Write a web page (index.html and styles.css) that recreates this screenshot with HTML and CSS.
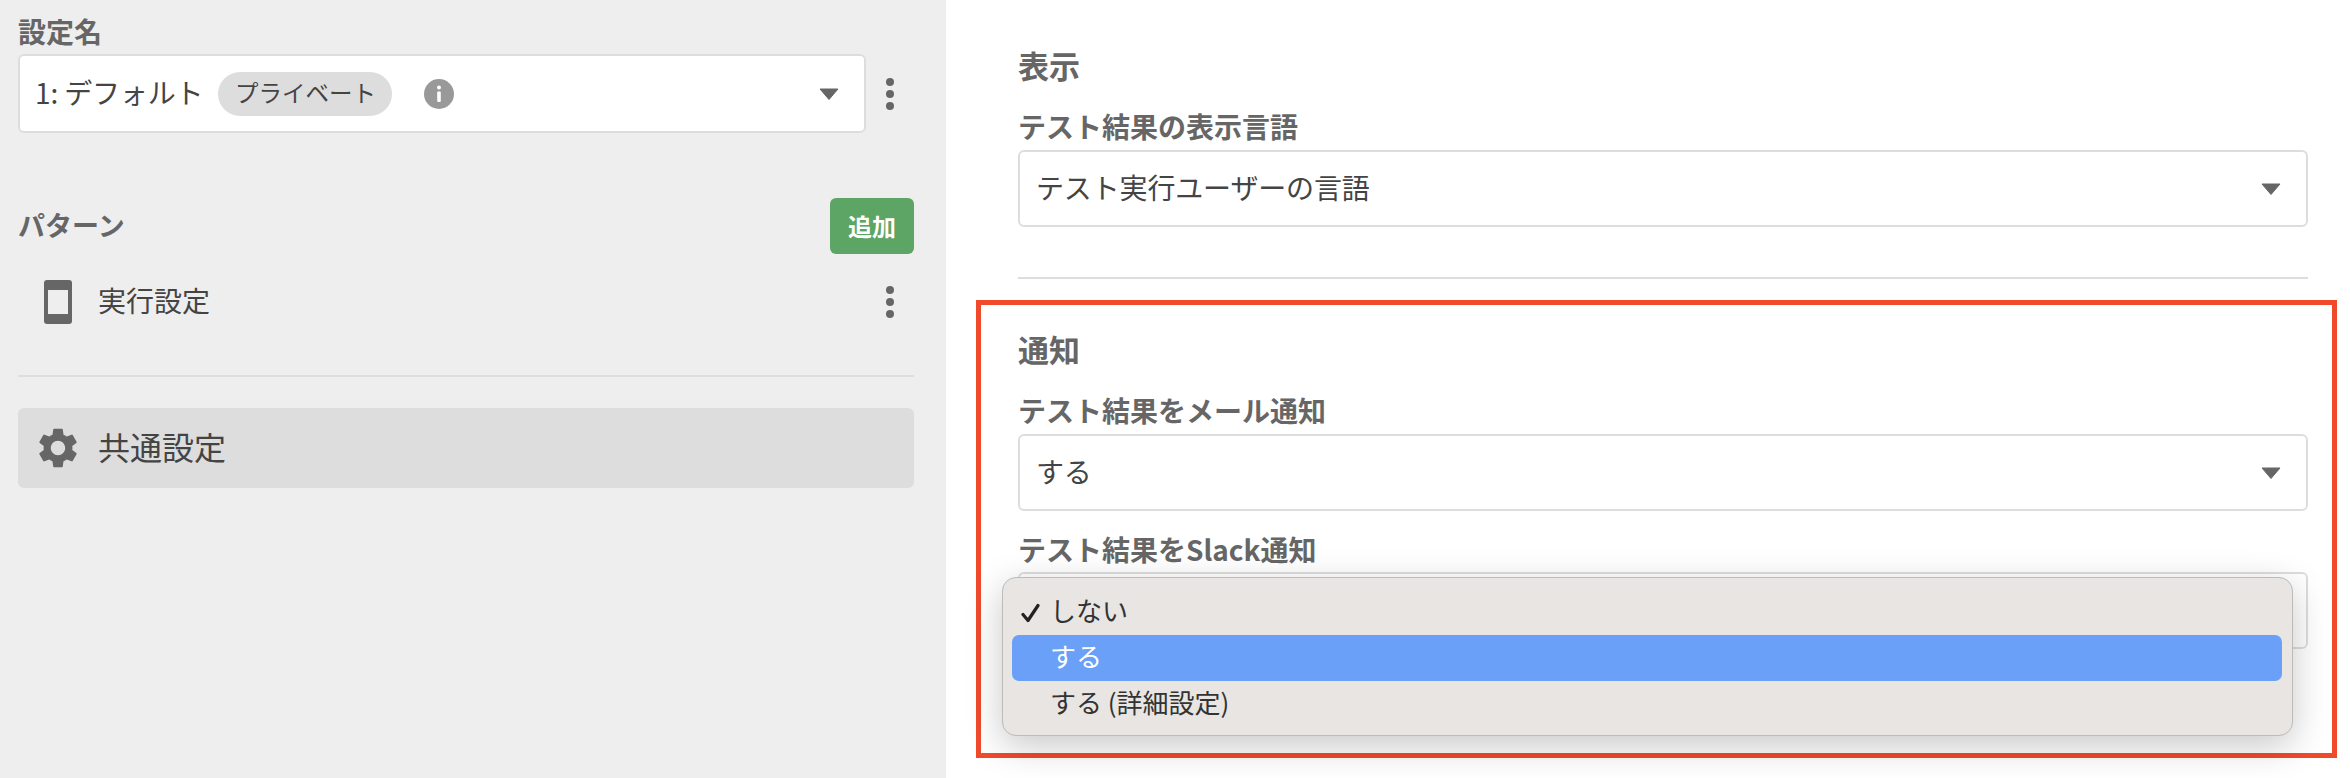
FILE: index.html
```html
<!DOCTYPE html>
<html lang="ja">
<head>
<meta charset="utf-8">
<title>設定</title>
<link rel="stylesheet" href="styles.css">
</head>
<body>
<div class="page">
  <aside class="sidebar">
    <div class="side-label">設定名</div>
    <div class="config-row">
      <div class="select config-select">
        <span class="select-text">1: デフォルト</span>
        <span class="chip">プライベート</span>
        <svg class="info" viewBox="0 0 30 30"><circle cx="15" cy="15" r="15" fill="#999"/><circle cx="15" cy="8.5" r="2" fill="#fff"/><rect x="13.2" y="12.5" width="3.6" height="10.5" rx="1" fill="#fff"/></svg>
        <svg class="caret" viewBox="0 0 20 12"><path d="M1 1h18l-9 10.500z" fill="#666" stroke="#666" stroke-linejoin="round"/></svg>
      </div>
      <div class="kebab"><i></i><i></i><i></i></div>
    </div>
    <div class="pattern-head">
      <span class="side-title">パターン</span>
      <button class="add">追加</button>
    </div>
    <div class="pattern-row">
      <svg class="phone" viewBox="0 0 28 44"><rect width="28" height="44" rx="3" fill="#666"/><rect x="4" y="10" width="20" height="24" fill="#eee"/></svg>
      <span class="pattern-name">実行設定</span>
      <div class="kebab kebab-end"><i></i><i></i><i></i></div>
    </div>
    <hr class="side-rule">
    <div class="common">
      <svg class="gear" viewBox="0 0 24 24"><path fill="#666" d="M19.14 12.94c.04-.3.06-.61.06-.94 0-.32-.02-.64-.07-.94l2.03-1.58a.49.49 0 0 0 .12-.61l-1.92-3.32a.488.488 0 0 0-.59-.22l-2.39.96c-.5-.38-1.03-.7-1.62-.94l-.36-2.54a.484.484 0 0 0-.48-.41h-3.84c-.24 0-.43.17-.47.41l-.36 2.54c-.59.24-1.13.57-1.62.94l-2.39-.96c-.22-.08-.47 0-.59.22L2.74 8.87c-.12.21-.08.47.12.61l2.03 1.58c-.05.3-.09.63-.09.94s.02.64.07.94l-2.03 1.58a.49.49 0 0 0-.12.61l1.92 3.32c.12.22.37.29.59.22l2.39-.96c.5.38 1.03.7 1.62.94l.36 2.54c.05.24.24.41.48.41h3.84c.24 0 .44-.17.47-.41l.36-2.54c.59-.24 1.13-.56 1.62-.94l2.39.96c.22.08.47 0 .59-.22l1.92-3.32c.12-.22.07-.47-.12-.61l-2.01-1.58zM12 15.600c-1.980 0-3.600-1.620-3.600-3.600s1.620-3.600 3.600-3.600 3.600 1.620 3.600 3.600-1.620 3.600-3.600 3.600z"/></svg>
      <span class="common-name">共通設定</span>
    </div>
  </aside>
  <main class="main">
    <h2 class="heading">表示</h2>
    <div class="field-label">テスト結果の表示言語</div>
    <div class="select wide-select">
      <span class="select-text">テスト実行ユーザーの言語</span>
      <svg class="caret" viewBox="0 0 20 12"><path d="M1 1h18l-9 10.500z" fill="#666" stroke="#666" stroke-linejoin="round"/></svg>
    </div>
    <hr class="main-rule">
    <h2 class="heading">通知</h2>
    <div class="field-label">テスト結果をメール通知</div>
    <div class="select wide-select">
      <span class="select-text">する</span>
      <svg class="caret" viewBox="0 0 20 12"><path d="M1 1h18l-9 10.500z" fill="#666" stroke="#666" stroke-linejoin="round"/></svg>
    </div>
    <div class="field-label second">テスト結果をSlack通知</div>
    <div class="select wide-select"></div>
  </main>
</div>
<div class="annotation"></div>
<ul class="menu">
  <li class="menu-item checked"><svg class="check" viewBox="0 0 19 20"><path d="M2 11.500l5 6L17 2.500" fill="none" stroke="#222" stroke-width="3.200" stroke-linecap="round" stroke-linejoin="round"/></svg>しない</li>
  <li class="menu-item active">する</li>
  <li class="menu-item">する (詳細設定)</li>
</ul>
</body>
</html>
```
FILE: styles.css
```css
* { box-sizing: border-box; }
html, body { margin: 0; height: 100%; }
body {
  background: #fff;
  font-family: "Noto Sans CJK JP", "Noto Sans", sans-serif;
  overflow: hidden;
}
.page { display: flex; height: 778px; }

.sidebar {
  width: 946px;
  flex: none;
  background: #eee;
  padding: 13px 32px 0 18px;
}
.side-label {
  height: 41px;
  font-size: 28px;
  line-height: 37px;
  font-weight: 700;
  color: #666;
}
.config-row { display: flex; align-items: center; }
.select {
  display: flex;
  align-items: center;
  background: #fff;
  border: 2px solid #ddd;
  border-radius: 6px;
  padding: 0 16px;
  height: 77px;
  color: #444;
}
.config-select { width: 848px; height: 79px; padding-left: 15px; }
.select-text { font-size: 28px; line-height: 40px; margin-bottom: 3px; letter-spacing: -0.15px; }
.chip {
  margin-left: 15px;
  height: 44px;
  width: 174px;
  border-radius: 22px;
  background: #ddd;
  font-size: 23.5px;
  line-height: 41px;
  text-align: center;
  color: #444;
}
.info { width: 30px; height: 30px; margin-left: 32px; }
.caret { width: 20px; height: 12px; margin-left: auto; margin-right: 9px; }
.kebab {
  display: flex;
  flex-direction: column;
  gap: 4px;
  margin-left: 20px;
}
.kebab i { display: block; width: 8px; height: 8px; border-radius: 50%; background: #666; }
.kebab-end { margin-left: auto; margin-right: 20px; }

.pattern-head {
  display: flex;
  align-items: center;
  justify-content: space-between;
  margin-top: 65px;
  height: 56px;
}
.side-title { font-size: 27px; font-weight: 700; color: #666; line-height: 40px; margin-bottom: 3px; }
.add {
  width: 84px;
  height: 56px;
  border: 0;
  border-radius: 6px;
  padding: 0;
  background: #5ca564;
  color: #fff;
  font: 700 24px/54px "Noto Sans CJK JP", sans-serif;
}
.pattern-row {
  display: flex;
  align-items: center;
  height: 80px;
  margin-top: 8px;
  padding-left: 26px;
}
.phone { width: 28px; height: 44px; }
.pattern-name { margin-left: 26px; font-size: 28px; line-height: 40px; color: #444; margin-bottom: 4px; }
.side-rule { height: 2px; margin: 33px 0 31px; border: 0; background: #ddd; }
.common {
  display: flex;
  align-items: center;
  height: 80px;
  border-radius: 6px;
  background: #ddd;
  padding-left: 16px;
}
.gear { width: 48px; height: 48px; }
.common-name { margin-left: 16px; font-size: 32px; line-height: 40px; color: #444; margin-bottom: 4px; }

.main { flex: 1; padding: 46px 42px 0 72px; }
.heading { margin: 0 0 21px; height: 40px; font-size: 31px; line-height: 37px; font-weight: 700; color: #666; }
.field-label { height: 40px; margin-bottom: 3px; font-size: 28px; line-height: 38px; font-weight: 700; color: #666; }
.field-label.second { margin-top: 19px; margin-bottom: 2px; }
.wide-select { width: 100%; }
.main-rule { height: 2px; margin: 50px 0 51px; border: 0; background: #ddd; }

.annotation {
  position: absolute;
  left: 976px;
  top: 300px;
  width: 1361px;
  height: 458px;
  border: 5px solid #f04a2b;
  pointer-events: none;
}
.menu {
  position: absolute;
  left: 1002px;
  top: 577px;
  width: 1291px;
  height: 159px;
  margin: 0;
  padding: 11px 10px 11px 9px;
  list-style: none;
  background: #e8e5e2;
  border: 1px solid #bbb;
  border-radius: 14px;
  box-shadow: 0 10px 36px rgba(0, 0, 0, .22);
}
.menu-item {
  position: relative;
  height: 46px;
  padding-left: 38px;
  border-radius: 7px;
  font-size: 26px;
  line-height: 42px;
  color: #333;
}
.menu-item.active { background: #6aa0f8; color: #fff; }
.check { position: absolute; left: 9px; top: 14px; width: 19px; height: 20px; }
```
